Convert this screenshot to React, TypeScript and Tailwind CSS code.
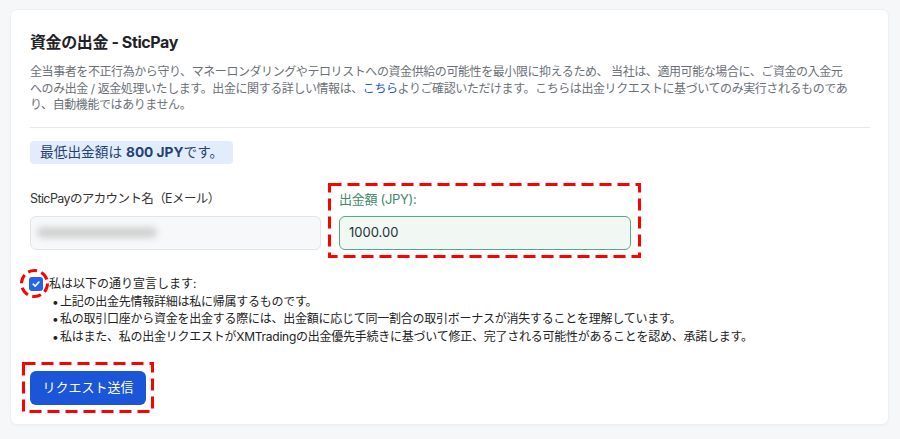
import React from "react";

const font = { fontFamily: 'Inter, "Noto Sans CJK JP", sans-serif' };

function DashBox({ w, h, className }: { w: number; h: number; className: string }) {
  return (
    <svg className={className} width={w} height={h} viewBox={`0 0 ${w} ${h}`} fill="none">
      <rect x="1.5" y="1.5" width={w - 3} height={h - 3} stroke="#ff0000" strokeWidth="3" strokeDasharray="12 6" />
    </svg>
  );
}

export default function App() {
  return (
    <div className="h-[439px] w-[900px] bg-[#f6f7f9] pt-[9px] pl-[10px]" style={font}>
      <div className="w-[879px] h-[416px] bg-white rounded-[7px] border border-[#eef0f3] shadow-[0_1px_2px_rgba(0,0,0,0.04)] px-[19px] pt-[20px] pb-[19px]">
        <h1 className="text-[16px] font-bold leading-[24px] tracking-[-0.4px] text-[#1f2328]">資金の出金 - SticPay</h1>
        <p className="mt-[10px] whitespace-nowrap text-[12px] leading-[16.5px] tracking-[-0.42px] text-[#6b7078] w-[840px]">
          全当事者を不正行為から守り、マネーロンダリングやテロリストへの資金供給の可能性を最小限に抑えるため、 当社は、適用可能な場合に、ご資金の入金元
          <br />
          へのみ出金 / 返金処理いたします。出金に関する詳しい情報は、<span className="text-[#1a56db]">こちら</span>よりご確認いただけます。こちらは出金リクエストに基づいてのみ実行されるものであ
          <br />
          り、自動機能ではありません。
        </p>
        <div className="mt-[13px] h-[1px] w-[840px] bg-[#e6e8eb]" />
        <div className="mt-[13px] inline-flex h-[23px] items-center rounded-[4px] bg-[#e2edfc] px-[10px] text-[13.7px] text-[#263f73]">
          最低出金額は&nbsp;<span className="font-bold">800 JPY</span>です。
        </div>
        <div className="mt-[26px] grid grid-cols-[291px_292px] gap-x-[18px]">
          <div className="flex flex-col">
            <label className="h-[18px] whitespace-nowrap text-[12.5px] leading-[18px] tracking-[-0.6px] text-[#333]">SticPayのアカウント名（Eメール）</label>
            <div className="mt-[8px] flex h-[34px] items-center rounded-[6px] border border-[#e1e4e8] bg-[#f7f8fa] px-[6px]">
              <div className="h-[11px] w-[120px] rounded-full bg-[#d2d2d2] blur-[3px]" />
            </div>
          </div>
          <div className="relative flex flex-col">
            <label className="h-[18px] text-[13px] leading-[18px] tracking-[-0.3px] text-[#3e8a68]">出金額 (JPY):</label>
            <div className="mt-[8px] flex h-[34px] items-center rounded-[6px] border border-[#52ab85] bg-[#f1f8f4] px-[9px] text-[13px] text-[#24303a]">
              1000.00
            </div>
            <DashBox w={313} h={75} className="pointer-events-none absolute left-[-11px] top-[-7px]" />
          </div>
        </div>
        <div className="relative mt-[26px] flex items-center h-[17px]">
          <svg className="pointer-events-none absolute left-[-10px] top-[-7px]" width="29" height="29" viewBox="0 0 29 29" fill="none">
            <circle cx="14.5" cy="14.5" r="13" stroke="#ff0000" strokeWidth="3" strokeDasharray="9 4.6" />
          </svg>
          <div className="ml-[-1px] flex h-[14px] w-[14px] items-center justify-center rounded-[3px] bg-[#2463eb]">
            <svg width="10" height="10" viewBox="0 0 10 10" fill="none">
              <path d="M2.2 5.2 L4.2 7.1 L7.9 3" stroke="white" strokeWidth="1.6" strokeLinecap="round" strokeLinejoin="round" />
            </svg>
          </div>
          <span className="ml-[6px] text-[12px] text-[#222]">私は以下の通り宣言します:</span>
        </div>
        <ul className="ml-[22px] whitespace-nowrap text-[12px] leading-[17.5px] tracking-[-0.25px] text-[#222]">
          <li className="flex"><span className="w-[8px]">•</span>上記の出金先情報詳細は私に帰属するものです。</li>
          <li className="flex"><span className="w-[8px]">•</span>私の取引口座から資金を出金する際には、出金額に応じて同一割合の取引ボーナスが消失することを理解しています。</li>
          <li className="flex"><span className="w-[8px]">•</span>私はまた、私の出金リクエストがXMTradingの出金優先手続きに基づいて修正、完了される可能性があることを認め、承諾します。</li>
        </ul>
        <div className="relative mt-[26px] inline-block">
          <button className="h-[34px] w-[116px] rounded-[6px] bg-[#1b55d8] text-[13px] text-white">リクエスト送信</button>
          <DashBox w={132} h={51} className="pointer-events-none absolute left-[-8px] top-[-9px]" />
        </div>
      </div>
    </div>
  );
}
